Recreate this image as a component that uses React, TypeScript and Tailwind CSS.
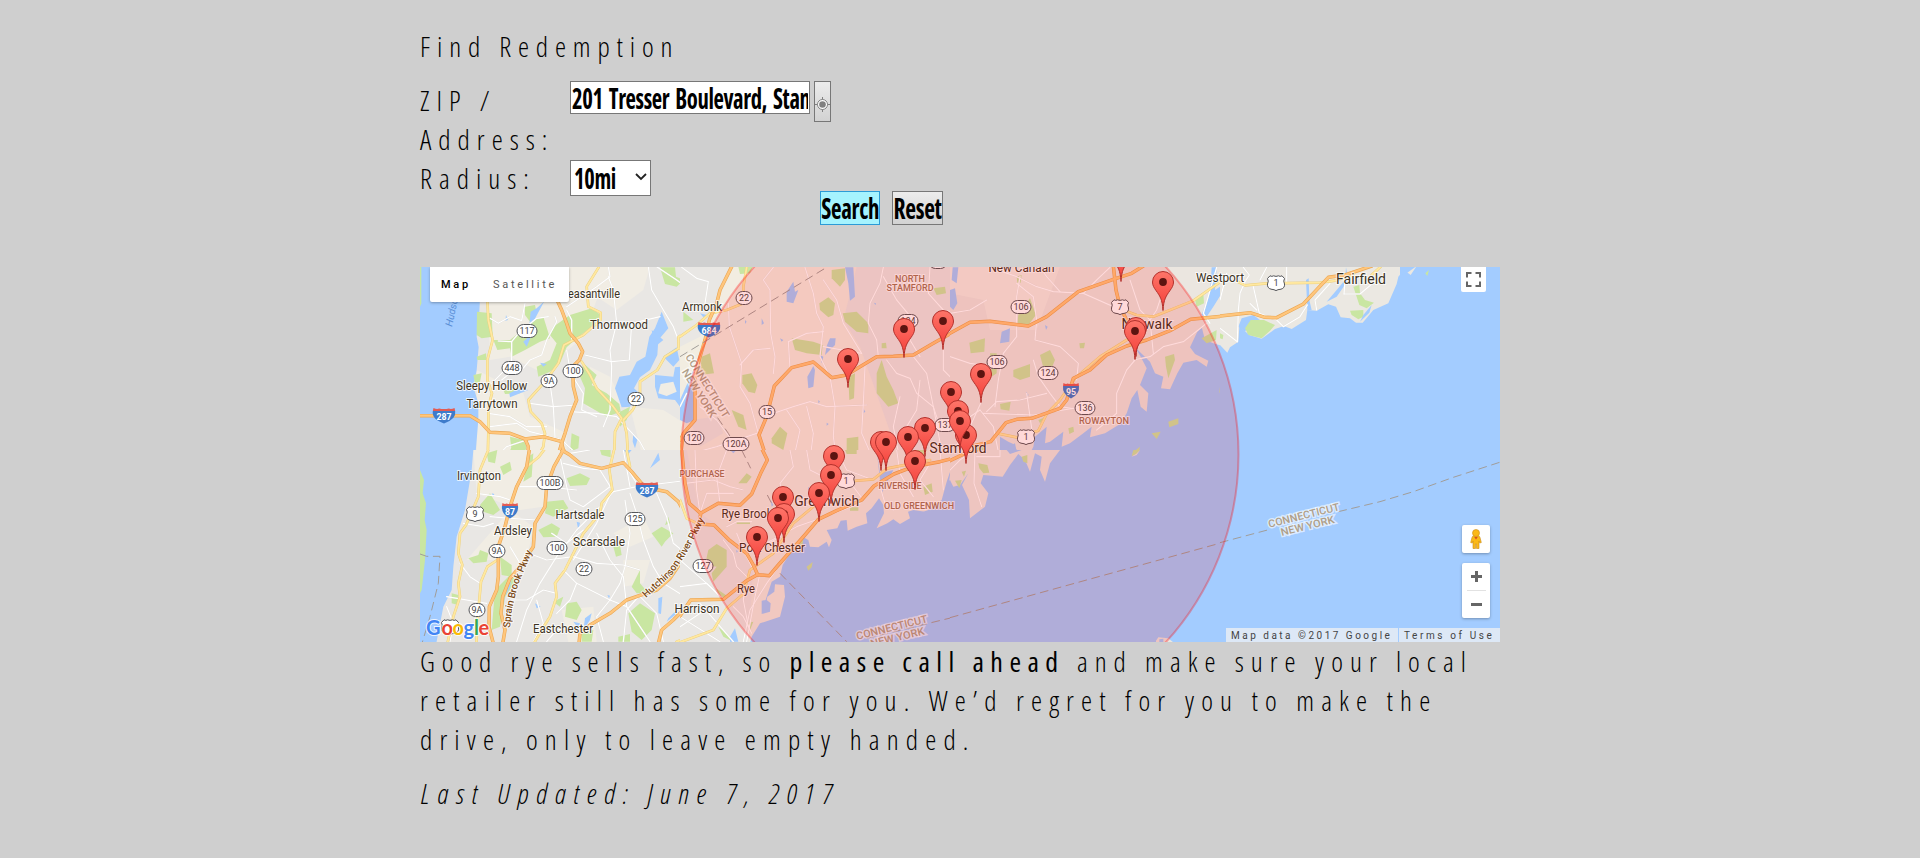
import React from "react";

type RoadKind = "hwy" | "art" | "loc";
type Road = [RoadKind, string];
interface Tile {
  x: number;
  y: number;
  base: string;
  rural?: string[];
  water: string[];
  land?: string[];
  parks: string[];
  lakes: string[];
  roads: Road[];
  dashed?: string[];
}

const LAND = "#e9e7e4";
const RURAL = "#f1ede4";
const WATER = "#a3ccff";
const PARK = "#c9e6a2";

/* Each tile is 280x200 on the map and uses an 840x600 local grid. */
const TILES: Tile[] = [
  {
    x: -10, y: -7, base: LAND,
    rural: [
      "M230 20H600L560 120 520 230 440 300 380 330 300 290 240 300Z",
      "M200 330L340 400 360 470 470 520 470 600 200 600Z",
      "M600 20H720L700 90 620 150 560 110Z", "M660 440L760 450 840 500 840 600 700 600Z",
      "M540 320L600 350 640 430 600 470 530 440Z",
    ],
    water: ["M30 20H215L208 155 200 230 206 262 200 330 190 380 205 430 205 480 195 600H30Z"],
    parks: [
      "M30 20H34V130L30 140Z",
      "M201 155L245 160 248 230 215 235 200 225Z", "M200 290L228 280 230 300 202 300Z",
      "M250 240L300 240 330 215 370 180 400 170 420 235 390 245 345 270 305 290 300 265 262 270Z",
      "M430 200L480 165 545 145 572 165 545 200 500 235 470 262 450 310 420 335 385 350 380 320 420 300 440 250 420 225Z",
      "M345 140L375 135 380 160 360 185 345 165Z",
      "M520 310L560 345 545 375 590 400 628 432 632 455 590 470 520 430 525 385 510 350Z",
      "M750 22H795L798 50 822 60 800 80 765 72Z",
      "M300 530L340 540 350 560 340 590 305 575Z M485 520L508 530 505 565 480 575Z M310 548L340 550 336 580 300 572Z",
      "M630 455L660 440 650 480 630 500Z M810 160L840 150 840 190 820 180Z",
      "M280 390L330 385 330 400 285 402Z M575 570L625 572 625 600 570 600Z M190 345L215 340 210 365 195 370Z",
    ],
    lakes: [
      "M755 155L775 205 745 240 742 285 720 330 690 352 672 385 690 402 660 440 635 442 615 385 628 350 660 345 680 305 706 290 718 230 735 205Z",
      "M735 345L790 350 795 322 812 320 815 395 835 425 830 455 810 440 795 420 745 415 735 380Z",
      "M760 290L800 262 808 300 790 320Z", "M362 155L380 145 402 125 370 185 358 195Z",
      "M340 245L362 225 380 190 350 260Z", "M298 400L330 385 355 390 300 412Z",
      "M670 520L682 540 675 565 668 545Z M700 570L720 590 705 595Z M725 210L760 240 735 260Z M288 165L294 180 286 182Z M390 308L410 312 400 320Z",
    ],
    land: ["M752 372L790 365 800 395 770 408 745 400Z"],
    roads: [
      ["loc", "M240 175L265 190 300 170 335 182 345 130"],
      ["loc", "M265 243L305 245 330 215 380 175 415 170"],
      ["loc", "M305 245V300 L300 340 275 360"],
      ["loc", "M435 170L440 185 410 240 395 285 360 300 335 330"],
      ["loc", "M470 140L560 80 600 50 595 20"],
      ["loc", "M595 50L610 90 620 190 600 270 605 320 600 450 580 500"],
      ["loc", "M525 285L605 305 658 300 665 190 750 170"],
      ["loc", "M715 20L725 90 760 150 790 200 805 240"],
      ["loc", "M470 270L480 330 495 360 520 400 515 450 560 470"],
      ["loc", "M360 430L430 440 500 435"], ["loc", "M420 370L430 440 435 530"],
      ["loc", "M235 460L300 470 350 500 410 500"], ["loc", "M240 500L320 490 360 515 460 540"],
      ["loc", "M480 455L560 460 620 470 690 545 720 600"], ["loc", "M460 545L520 600"],
      ["loc", "M250 600L290 560 350 540"], ["loc", "M740 20L800 60 840 90"],
      ["loc", "M485 240V180L470 150"], ["loc", "M280 335L245 370"],
      ["art", "M232 120L235 180 248 240 232 300 232 360 246 400 235 440 235 520 233 600"],
      ["art", "M566 22L530 80 535 140 572 158 572 180 520 225 462 255 445 310 405 365 355 420 362 455 395 490 405 520 400 560 378 600"],
      ["art", "M515 305L540 345 560 385 610 440 635 475 615 515 612 600"],
      ["art", "M806 265L765 290 742 330 690 365 690 405 668 450 640 480 650 520 655 600"],
      ["art", "M840 205L805 232 806 265"],
      ["hwy", "M430 95L455 150 470 190 480 220 505 250 518 275 508 300 488 320 490 380 500 420 480 470 465 520 455 550 460 570 500 602"],
      ["hwy", "M455 550L440 600"],
      ["hwy", "M30 467H180L210 485 240 517 300 520 345 537 400 530 455 545"],
      ["hwy", "M345 537L355 560 352 600"],
    ],
  },
  {
    x: -10, y: 183, base: LAND,
    rural: [
      "M190 0H460L420 80 400 170 330 180 200 130Z", "M300 180L370 230 350 330 290 380 250 330 170 330Z",
      "M455 480L550 470 560 575 480 600Z", "M610 250L700 200 730 260 660 290Z", "M640 330L720 330 700 400 640 410Z",
    ],
    water: ["M30 0H190L185 60 165 180 140 260 130 350 125 420 100 470 75 600H30Z"],
    parks: [
      "M30 60L42 90 38 130 48 160 44 210 50 240 45 330 35 420 30 430Z",
      "M230 10L262 0 255 40 235 35Z M270 50L300 35 305 60 280 75Z M210 165L240 130 270 180 250 195 220 185Z",
      "M410 155L460 150 475 175 430 200 405 190Z M385 240L425 220 450 235 440 260 400 262Z",
      "M470 85L510 70 540 85 530 105 480 108Z M175 325L205 315 210 300 235 310 230 335 190 340Z",
      "M270 320L305 345 305 380 275 375Z M255 420L300 375 320 390 285 440 270 530 245 540 250 480Z",
      "M655 490L690 460 735 490 725 540 695 570 665 545Z M470 460L500 455 515 480 500 510 465 500Z",
      "M725 250L755 230 790 250 765 275 755 290Z M610 290L630 285 635 315 618 320Z",
      "M665 410L690 360 690 400 715 430 680 430Z M625 560L660 552 660 575 625 575Z",
      "M125 430L145 435 143 465 125 460Z M355 20L370 10 365 80 340 95Z M515 550L550 540 545 575 515 575Z M430 455L460 440 450 470Z",
      "M765 225L775 200 780 220Z M570 0H602V22L575 15Z",
    ],
    lakes: [
      "M745 8L750 30 720 55Z M375 460L392 470 380 475Z M745 445L757 440 753 492 745 490Z M775 505L800 480 795 495 770 515Z",
      "M295 395L305 385 300 410 285 440 280 470Z M500 215L510 218 505 240Z M525 505L545 490 540 510 520 540Z M245 130L253 132 250 140Z M640 0H665L655 12Z M592 435L600 437 597 445Z M490 515L510 520 505 535Z",
    ],
    roads: [
      ["loc", "M450 20L470 110 480 150 520 170 600 110"], ["loc", "M460 40L520 55 570 60 610 125"],
      ["loc", "M655 60L680 100 740 130 770 200 790 280 840 320"],
      ["loc", "M610 125L570 170 500 240 440 320 390 400 350 480 320 575"],
      ["loc", "M600 135L560 220 490 330"], ["loc", "M660 130L680 190 700 270 730 350 760 400 840 450"],
      ["loc", "M610 125L680 110 840 90"], ["loc", "M645 150L660 250 645 350 630 400 600 450"],
      ["loc", "M240 200L300 205 380 210"], ["loc", "M330 110L400 110 500 120"],
      ["loc", "M160 220L220 230 250 220"], ["loc", "M150 340L180 380 210 400"],
      ["loc", "M370 315L410 330 490 320 560 340 640 345 690 360"],
      ["loc", "M460 360L500 400 560 430 600 450 650 470 690 530 720 575"],
      ["loc", "M440 430L400 420 350 450 300 450"], ["loc", "M500 400L480 450 440 490"],
      ["loc", "M560 250L600 330 640 380 650 470"], ["loc", "M690 440L740 490 760 575"],
      ["loc", "M600 450L560 500 580 575"], ["loc", "M300 290L330 340 320 380"],
      ["loc", "M200 130L270 140 300 150"], ["loc", "M640 0L660 110"], ["loc", "M480 10L540 0"],
      ["loc", "M110 470L130 520 120 575"], ["loc", "M410 575L440 540 520 530"], ["loc", "M690 435L650 480 640 575"],
      ["loc", "M110 440L230 460"], ["loc", "M425 250L470 280 520 240"], ["loc", "M380 450L400 520 370 575"],
      ["art", "M235 0L210 60 205 140 168 225 150 250 145 310 157 345 145 400 150 440 130 500 108 600"],
      ["art", "M262 330L232 350 213 395 205 480 198 600"],
      ["art", "M402 0L385 22 350 50 320 110"],
      ["art", "M612 0L598 60 607 120 575 160 570 190 520 250 490 310 465 360 435 400 440 440 420 500 395 540 360 600"],
      ["art", "M650 0L660 50"], ["art", "M840 560L800 575 790 600"],
      ["hwy", "M460 0L432 50 410 110 405 170 375 220 370 290 330 350 300 385 278 440 273 490 285 540 275 600"],
      ["hwy", "M455 0L480 15 510 40 575 55 640 38 665 65 705 112 770 125 805 155 845 225"],
      ["hwy", "M358 0L350 50 320 110 300 170 285 230 265 290 265 380 260 420 238 470 237 530 255 600"],
      ["hwy", "M845 290L780 385 740 420 690 436 650 450 600 490 540 525 510 550 505 600"],
      ["hwy", "M845 455L790 510 755 540 740 600"],
    ],
    dashed: ["M30 312L50 319H90L85 400 60 500 30 600"],
  },
  {
    x: 260, y: -7, base: "#f2ede1",
    water: ["M0 420L40 330 45 480 20 490 0 480Z"],
    parks: [
      "M455 30L495 25 495 60 480 80 455 55Z", "M418 130L445 112 465 130 460 165 445 172 420 150Z",
      "M488 160L530 155 565 190 565 220 530 215 495 185Z", "M335 235L400 245 428 255 425 285 380 280 345 270Z",
      "M187 345L215 340 232 375 225 400 205 395 187 370Z", "M155 450L190 465 200 510 175 500Z",
      "M275 535L300 500 322 520 310 570 275 550Z", "M605 300L620 350 640 390 655 430 625 440 590 400 590 340Z",
      "M505 350L525 340 522 415 508 420Z M500 535L535 530 535 575 520 595 500 580Z",
      "M760 85L795 80 798 100 770 105Z M175 20H218L210 40 180 42Z M10 155L40 180 10 185Z",
      "M65 290L90 280 102 340 60 345Z M605 250L618 248 620 265 605 265Z",
    ],
    lakes: [
      "M495 22H520L525 110 510 122 505 70Z", "M320 95L340 65 345 95 355 90 340 130 320 125Z",
      "M450 235L467 235 465 255 435 285 440 258Z", "M400 318L405 330 400 380 385 385 382 350Z",
      "M810 95L835 85 840 135 820 120Z M420 285L430 290 425 310Z M245 175L252 190 245 195Z M300 235L310 240 305 245Z M195 180L200 185 195 192Z M550 445L556 455 550 460Z M415 420L420 425 415 430Z M440 488L446 492 440 497Z M60 160L80 165 70 172Z M582 128L588 130 586 136Z",
    ],
    roads: [
      ["loc", "M5 22L50 55 85 65 75 130"], ["loc", "M280 22L250 60 270 90 272 220 285 290 280 340"],
      ["loc", "M145 130L148 200 185 310 180 380 210 430 235 520"], ["loc", "M375 22L400 100 410 160 430 200 420 290 450 350"],
      ["loc", "M430 60L470 120 490 190 545 280"], ["loc", "M610 22L600 70 570 130 565 190 590 240 595 290"],
      ["loc", "M610 50L650 120 700 180 690 240 720 290"], ["loc", "M750 22L745 100 790 150 840 160"],
      ["loc", "M180 315L220 270 270 265"], ["loc", "M325 245L380 220 430 215"], ["loc", "M330 325L325 245"],
      ["loc", "M450 350L465 440 460 530 470 600"], ["loc", "M555 320L550 430 545 520 580 600"],
      ["loc", "M280 460L340 440 390 425 440 440 560 435"], ["loc", "M380 440L400 520 390 600"],
      ["loc", "M620 300L650 340 690 355 710 400 760 440 780 500"], ["loc", "M700 290L740 340 760 440 790 600"],
      ["loc", "M790 260V330L830 370"], ["loc", "M720 360L710 450 680 500"], ["loc", "M320 450L360 510 340 600"],
      ["loc", "M60 440L110 480 170 560 220 600"], ["loc", "M0 590L110 560 230 520"], ["loc", "M660 410L640 500 660 600"],
      ["loc", "M430 260L545 280"], ["loc", "M0 440L20 400"],
      ["art", "M0 230L50 195 90 160 140 150 190 130 190 80 200 22"],
      ["hwy", "M155 20L120 90 110 130 88 180 75 240 60 290 45 350 45 480 10 520 0 600"],
      ["hwy", "M840 205L760 250 700 285 640 289 590 290 540 320 500 345 455 353 400 306 335 323 283 378 260 470 237 525 262 602"],
      ["hwy", "M12 520L0 540"],
    ],
    dashed: ["M0 290L440 22", "M90 440L145 520 190 600"],
  },
  {
    x: 260, y: 183, base: "#efebe2",
    water: [
      "M205 600L215 560 240 520 300 500 315 440 312 405 285 403 283 425 262 440 255 480 250 470 275 395 300 380 308 345 330 310 345 300 370 262 385 270 390 290 415 292 440 275 447 292 455 270 440 240 472 235 482 212 500 210 503 242 530 230 562 220 558 190 575 175 597 145 610 165 612 190 590 235 622 220 640 208 660 222 690 205 684 185 700 180 735 185 715 225 692 255 690 292 640 296 630 272 655 275 665 245 690 232 702 195 745 180 785 150 800 95 812 60 808 90 830 120 845 110 845 600Z",
      "M590 0L600 90 612 95 605 130 640 60 600 70Z",
    ],
    parks: [
      "M175 100L200 70 215 80 200 100Z M85 300L110 282 140 300 140 350 100 395 95 370 110 350 75 345Z",
      "M170 215H210V222H170Z M730 110L755 100 758 125 735 135Z M510 172H535V182H510Z M345 280L370 262 368 285 350 300Z",
      "M108 415L145 440 120 445Z M115 530L150 560 160 575 130 560Z M200 520L220 515 210 540Z M380 350L398 336 395 352 385 362Z M700 0H740L730 20 705 18Z M495 0H530V12H500Z",
    ],
    lakes: ["M245 452L260 450 272 460 270 485 245 492Z M150 0H170L160 10Z M150 560L165 535 175 575H150Z M385 110L390 116 385 120Z M272 150L280 165 275 170Z M168 300L174 304 170 308Z"],
    roads: [
      ["loc", "M15 100L100 90 150 110 190 120"], ["loc", "M45 0L50 120 60 190"], ["loc", "M120 160L110 80 140 0"],
      ["loc", "M60 190L80 130 160 130"], ["loc", "M330 0L340 50 300 100 310 140 400 170"],
      ["loc", "M380 0L390 60 450 90"], ["loc", "M470 0L500 60 580 90"], ["loc", "M420 60L520 110 550 150"],
      ["loc", "M0 410L80 400 130 448"], ["loc", "M130 270L160 310 170 350 200 380 190 450 205 530"],
      ["loc", "M190 575L210 480 260 400 310 330"], ["loc", "M160 470L190 500 215 550"], ["loc", "M60 460L160 575"],
      ["loc", "M0 530L90 470"], ["loc", "M0 330L80 400 130 448"], ["loc", "M650 0L660 70 700 140"],
      ["loc", "M750 40L720 90 760 140"], ["loc", "M180 300L250 290 300 260"], ["loc", "M170 250L190 300 215 350"],
      ["loc", "M240 370L225 440 200 575"], ["loc", "M600 110L615 160 640 180"], ["loc", "M780 0L790 120"],
      ["loc", "M140 230L170 215 215 215"], ["loc", "M0 500L120 575"], ["loc", "M220 300L350 230 450 195 540 160"],
      ["art", "M0 577L100 540 140 475 190 432 210 360 280 310 340 220 400 170 430 110 530 92 580 88 622 55 750 30"],
      ["art", "M0 150L20 205 62 225"],
      ["hwy", "M5 0L15 100 28 160 62 190 115 160 180 166 215 132 242 70 262 30 245 -5"],
      ["hwy", "M62 190L58 222 102 225 150 272 200 310 220 345 232 372"],
      ["hwy", "M0 498L32 450 130 448 200 392 232 374 268 377 295 345 372 258 415 208 470 182 545 150 582 108 642 72 700 50 780 35 845 18"],
    ],
    dashed: ["M300 370L500 575", "M560 565L840 497", "M185 0L212 55", "M262 135L280 170"],
  },
  {
    x: 530, y: -7, base: "#ebe6e0",
    rural: ["M0 20H330L260 210 120 210 100 120 0 100Z"],
    water: [
      "M150 530L175 545 190 552 200 570 215 600H230L250 560 255 530 290 500 285 550 300 545 340 515 335 560 360 550 400 520 425 500 420 532 465 520 510 492 530 460 545 415 562 390 572 440 590 455 595 400 570 375 590 325 572 290 555 262 600 305 615 340 640 350 633 385 660 388 682 340 700 308 740 300 770 320 775 302 735 282 720 262 742 215 755 200 765 240 790 250 840 265 840 600H150Z",
      "M755 165L780 95 785 22H800L795 90 840 60 790 140 770 170Z",
    ],
    parks: [
      "M205 165L240 115 258 165 235 195 202 190Z", "M58 248L105 235 103 275 62 280Z", "M190 330L240 312 240 350 210 360 190 350Z",
      "M270 285L300 270 315 300 300 335 278 315Z", "M150 432L182 425 178 452 152 448Z M355 505L370 500 372 515 358 522Z",
      "M645 290L672 282 675 300 655 355 648 320Z", "M735 120L760 100 762 130 740 140Z M755 235L800 210 798 240 770 250Z",
      "M655 485L685 475 685 492 658 502Z M605 520L632 515 620 537Z M545 580L570 560 565 582 548 592Z M810 380L822 372 820 390 808 398Z",
      "M388 250L405 248 402 265 390 265Z M265 480L285 472 270 490Z M120 280H140V340L125 350Z M200 50L215 45 212 68 202 68Z M80 560H105V600H85Z",
    ],
    lakes: [
      "M0 90L15 85 22 130 10 150 0 140Z M155 215L180 205 178 245 150 250Z M285 195L293 200 288 210Z M228 395L236 405 230 412Z M8 22H25L20 70 5 60Z M175 560L190 600H205L195 550Z",
    ],
    roads: [
      ["loc", "M120 22L200 50 260 80 310 95 400 100 490 140"], ["loc", "M210 50L200 110 200 230 160 280 145 360 135 440"],
      ["loc", "M200 70L250 110 260 180 255 240 330 260 385 310 380 360"], ["loc", "M330 95L290 50 270 22"],
      ["loc", "M250 300L265 350 300 400 330 440 400 450"], ["loc", "M0 290L60 310 130 320"],
      ["loc", "M92 430L60 500 30 560"], ["loc", "M90 450L130 500 150 600"], ["loc", "M110 455L140 425 210 420 290 400"],
      ["loc", "M0 160L60 150 110 120"], ["loc", "M540 60L570 150 600 180"], ["loc", "M555 300L530 330 500 400 500 460 440 510"],
      ["loc", "M550 300L600 290 640 260 700 245 770 190"], ["loc", "M640 90L620 150 600 180 610 280"],
      ["loc", "M780 190L760 160 800 22"], ["loc", "M0 600L60 470 90 450"], ["loc", "M400 100L440 60 480 22"],
      ["loc", "M230 400L240 470 250 540"], ["loc", "M20 570L80 580 150 590"], ["loc", "M100 460L250 465 400 440"],
      ["art", "M142 520L200 532 265 512 290 462 330 420 375 355 450 290 530 240"],
      ["art", "M520 150L560 165 610 170 730 122 840 45"],
      ["hwy", "M0 220L60 187 120 184 235 198 290 170 385 95 490 58 545 40 580 18"],
      ["hwy", "M490 18L498 90 510 140 540 200 560 250"],
      ["hwy", "M0 600L60 560 122 545 168 488 200 478 245 475 330 445 350 420 370 355 420 330 470 285 530 258 590 240 660 212 722 178 845 166"],
    ],
  },
  {
    x: 530, y: 183, base: WATER,
    land: [
      "M0 0H330L300 40 285 95 270 60 275 20 255 10 240 65 225 30 205 12 180 45 158 80 100 75 92 100 115 130 105 170 60 205 57 150 36 105 55 70 30 105 10 110 0 90Z",
      "M618 572L625 562 655 565 670 577H618Z M545 20L570 0 560 15Z",
    ],
    water: ["M170 0L180 12 200 5 215 0Z"],
    parks: ["M85 40L112 45 118 68 100 70 88 55Z M215 20L232 15 232 40 220 35Z M15 92L35 90 28 115Z M545 18L550 0H570L558 12Z M35 65L48 62 42 80Z"],
    lakes: ["M628 568L640 566 640 577H628Z"],
    roads: [["loc", "M75 0L72 100 95 170"], ["loc", "M80 20H150V0"], ["loc", "M0 60L30 30 60 10"], ["hwy", "M0 32L50 8 80 0"]],
    dashed: ["M0 503L845 270"],
  },
  {
    x: 800, y: -7, base: WATER,
    land: [
      "M0 18H590L572 45 552 30 535 50 530 72 505 130 460 150 428 188 408 188 390 175 362 172 348 140 325 133 290 152 262 150 258 180 215 207 192 198 165 207 125 236 90 226 70 210 58 200 55 245 30 262 22 278 0 255Z",
    ],
    water: ["M540 18H590L560 40 540 45Z", "M55 200L65 175 100 165 120 180 90 190 75 215Z", "M258 60L266 55 268 120 275 150 262 150Z"],
    parks: ["M75 205L92 180 132 180 165 195 150 212 125 235 85 225Z", "M400 80L418 75 420 100 435 120 462 128 440 145 418 135Z", "M390 152L430 150 430 170 415 178 395 165Z", "M616 40L627 30 622 48Z M0 220L10 225 8 238 0 235Z"],
    lakes: ["M350 90L375 60 378 22 385 60 350 110 320 125Z", "M430 165L455 135 448 158 420 185Z"],
    roads: [
      ["loc", "M70 22L88 45 75 65 60 100 55 150 52 245"], ["loc", "M20 40L0 120"], ["loc", "M100 80L118 160 170 180 190 200 240 170 262 135"],
      ["loc", "M120 60L140 22"], ["loc", "M200 22L200 70"], ["loc", "M290 150L285 120 330 70"], ["loc", "M372 102L375 60"],
      ["loc", "M372 102H420L470 60"], ["loc", "M90 130L110 150"], ["loc", "M0 205L52 245"],
      ["art", "M55 66L75 76 140 70 300 68 345 62 400 45"], ["art", "M455 45L482 20"],
      ["hwy", "M0 168L90 158 135 172 170 173 250 132 325 52 375 45 455 18"],
    ],
  },
  {
    x: 800, y: 183, base: WATER, water: [], parks: [], lakes: [], roads: [],
    dashed: ["M0 278L150 238", "M355 185L480 155 580 125 700 82 845 35"],
  },
];

/* Built-up areas that sit below the parks. */
const URBAN: Record<string, string[]> = {
  "260,-7": ["M0 20H160L60 230 0 260Z", "M530 20H840V600H660L540 260 490 180Z", "M30 480L110 470 130 520 60 560Z"],
  "260,183": ["M20 0L60 190 110 225 220 350 205 600 0 600 0 0Z"],
};

const CASING: Record<RoadKind, string> = { hwy: "#e9a653", art: "#eccf7c", loc: "#dedbd6" };
const FILL: Record<RoadKind, string> = { hwy: "#ffc67c", art: "#ffe8a0", loc: "#ffffff" };
const OUTER: Record<RoadKind, number> = { hwy: 10.5, art: 8, loc: 4 };
const INNER: Record<RoadKind, number> = { hwy: 7, art: 5.5, loc: 3.6 };

function TileView({ t }: { t: Tile }) {
  const kinds: RoadKind[] = ["loc", "art", "hwy"];
  const fillAll = (list: string[] | undefined, c: string) =>
    (list ?? []).map((d, i) => <path key={c + i} d={d} fill={c} />);
  return (
    <svg x={t.x} y={t.y} width={280} height={200} viewBox="0 0 840 600" overflow="hidden">
      <rect width={840} height={600} fill={t.base} />
      {fillAll(t.rural, RURAL)}
      {t.base === WATER ? fillAll(t.land, "#ebe8e2") : null}
      {fillAll(URBAN[t.x + "," + t.y], LAND)}
      {fillAll(t.water, WATER)}
      {fillAll(t.parks, PARK)}
      {fillAll(t.lakes, WATER)}
      {t.base !== WATER ? fillAll(t.land, RURAL) : null}
      {kinds.map((k) => (
        <g key={k} fill="none" strokeLinejoin="round" strokeLinecap="round">
          {t.roads.filter((r) => r[0] === k).map((r, i) => (
            <path key={"c" + i} d={r[1]} stroke={CASING[k]} strokeWidth={OUTER[k]} />
          ))}
          {t.roads.filter((r) => r[0] === k).map((r, i) => (
            <path key={"f" + i} d={r[1]} stroke={FILL[k]} strokeWidth={INNER[k]} />
          ))}
        </g>
      ))}
      {(t.dashed ?? []).map((d, i) => (
        <path key={i} d={d} fill="none" stroke="#a19d99" strokeWidth={3} strokeDasharray="26 14" />
      ))}
    </svg>
  );
}

/* text, centre x, baseline, width, size */
type Label = [string, number, number, number, number];
const TOWNS: Label[] = [
  ["easantville", 174, 31, 52, 12], ["Thornwood", 199, 62, 58, 12],
  ["Sleepy Hollow", 71.7, 123, 71, 12], ["Tarrytown", 72, 141, 51, 12],
  ["Irvington", 59, 213, 44, 12], ["Hartsdale", 160, 252, 49, 12],
  ["Ardsley", 93, 268, 38, 12], ["Scarsdale", 179, 279, 52, 12],
  ["Eastchester", 143, 366, 60, 12], ["Harrison", 277, 346, 45, 12],
  ["Rye", 326, 326, 18, 12], ["Rye Brook", 327, 251, 51, 12],
  ["Port Chester", 352, 285, 66, 12], ["Greenwich", 406.7, 239, 65, 14.5],
  ["Armonk", 282, 44, 40, 12], ["New Canaan", 601.5, 5, 66, 12],
  ["Norwalk", 727, 62, 51, 14.5], ["Stamford", 538, 186, 57, 14.5],
  ["Westport", 800, 15, 48, 12], ["Fairfield", 941, 17, 50, 14],
];
const AREAS: Label[] = [
  ["NORTH", 490, 15, 30, 9.5], ["STAMFORD", 490, 24, 47, 9.5], ["PURCHASE", 282, 210, 45, 9.5],
  ["RIVERSIDE", 480, 222, 43, 9.5], ["OLD GREENWICH", 499, 242, 70, 9.5], ["ROWAYTON", 684, 157, 50, 9.5],
];
const BORDERS: { x: number; y: number; a: number; dx: number }[] = [
  { x: 472, y: 361, a: -14, dx: 3 }, { x: 884, y: 249, a: -14, dx: 1 }, { x: 287, y: 119, a: 58, dx: 2 },
];
/* number, x, y, width */
const OVALS: [string, number, number, number][] = [
  ["117", 107, 64, 20], ["448", 92, 101, 20], ["9A", 129, 114, 16], ["100", 153, 104, 20], ["22", 216, 132, 16],
  ["100B", 130, 216, 26], ["125", 215, 252, 20], ["100", 137, 281, 20], ["9A", 77, 284, 16], ["22", 164, 302, 16],
  ["9A", 57, 343, 16], ["22", 324, 31, 16], ["104", 488, 54, 20], ["15", 347, 145, 16], ["120", 274, 171, 20],
  ["120A", 316, 177, 26], ["137", 525, 158, 20], ["106", 601, 40, 20], ["106", 577, 95, 20], ["124", 628, 106, 20],
  ["136", 665, 141, 20], ["127", 283, 299, 20], ["", 518, -5, 18],
];
const US: [string, number, number][] = [
  ["9", 55, 247], ["", 30, 360], ["7", 700, 40], ["1", 606, 170], ["1", 426, 214], ["1", 856, 16],
];
const INTERSTATES: [string, number, number][] = [
  ["287", 24, 149], ["87", 90, 244], ["287", 227, 223], ["684", 289, 63], ["95", 651, 124],
];
const PINS: [number, number][] = [
  [701, -14], [743, 15], [523, 54], [484, 62], [716, 61], [715, 64], [428, 92], [561, 107], [531, 125],
  [538, 144], [546, 168], [540, 154], [505, 161], [488, 170], [461, 175], [466, 175], [414, 189], [495, 194],
  [411, 208], [399, 226], [363, 230], [364, 247], [358, 251], [337, 270],
];

const FONT = "Roboto, sans-serif";

function TownLabel({ l, fill, weight }: { l: Label; fill: string; weight: number }) {
  return (
    <text x={l[1]} y={l[2]} fontSize={l[4]} textAnchor="middle" textLength={l[3]} lengthAdjust="spacingAndGlyphs"
      fill={fill} stroke="#fff" strokeOpacity={0.75} strokeWidth={2} paintOrder="stroke" fontWeight={weight} fontFamily={FONT}>
      {l[0]}
    </text>
  );
}

function MapDrawing() {
  return (
    <svg className="block h-[375px] w-[1080px]" viewBox="0 0 1080 375">
      {TILES.map((t) => <TileView key={t.x + "," + t.y} t={t} />)}

      {BORDERS.map((b, i) => (
        <g key={i} transform={`translate(${b.x} ${b.y}) rotate(${b.a})`} fontFamily={FONT} fontSize={10.5} fontWeight={500}
          textAnchor="middle" fill="#b09f88" stroke="#fff" strokeOpacity={0.6} strokeWidth={2.8} paintOrder="stroke">
          <text y={3} textLength={73} lengthAdjust="spacingAndGlyphs">CONNECTICUT</text>
          <text x={b.dx} y={14} textLength={55} lengthAdjust="spacingAndGlyphs">NEW YORK</text>
        </g>
      ))}
      <path id="sprain" d="M90 361L92 342 98 318 116 276" fill="none" />
      <path id="hutch" d="M226 331L252 308 268 284 287 248" fill="none" />
      <g fontFamily={FONT} fontSize={10} fontWeight={500} fill="#7b4b17" stroke="#fff" strokeOpacity={0.8} strokeWidth={1.8} paintOrder="stroke">
        <text><textPath href="#sprain" textLength={80}>Sprain Brook Pkwy</textPath></text>
        <text><textPath href="#hutch" textLength={99}>Hutchinson River Pkwy</textPath></text>
      </g>
      <text transform="translate(32 60) rotate(-78)" fontFamily={FONT} fontSize={10} fontStyle="italic" fill="#5b8fd6">Hudson</text>

      {OVALS.map(([n, x, y, w], i) => (
        <g key={i}>
          <rect x={x - w / 2} y={y - 6.5} width={w} height={13} rx={6.5} fill="#fff" stroke="#55565a" strokeWidth={1} />
          <text x={x} y={y + 3.2} fontSize={9} textAnchor="middle" fill="#444" fontFamily={FONT}>{n}</text>
        </g>
      ))}
      {US.map(([n, x, y], i) => (
        <g key={i}>
          <path transform={`translate(${x - 9} ${y - 8})`} fill="#fff" stroke="#55565a" strokeWidth={1}
            d="M3 .8Q5 2 6.500.8Q9 2 11.500.8Q13 2 15 .8L17.500 3.500Q16 6 17.500 9Q18 13 14 14.200Q10.500 14.500 9 15.600Q7.500 14.500 4 14.200Q0 13 .5 9Q2 6 .5 3.500Z" />
          <text x={x} y={y + 3.2} fontSize={9} textAnchor="middle" fill="#444" fontFamily={FONT}>{n}</text>
        </g>
      ))}
      {INTERSTATES.map(([n, x, y], i) => {
        const k = n.length === 3 ? 1.4 : 1;
        return (
          <g key={i}>
            <g transform={`translate(${x} ${y - 1}) scale(${k} 1)`}>
              <path d="M-8-4Q-9 4 0 8.500Q9 4 8-4Z" fill="#3d7bcb" />
              <path d="M-7.500-7Q-5-5.500-3.500-6.500Q0-5.500 3.500-6.500Q5-5.500 7.500-7L8-4H-8Z" fill="#e25b54" />
            </g>
            <text x={x} y={y + 4} fontSize={8.8} fontWeight={700} textAnchor="middle" fill="#fff" fontFamily={FONT}>{n}</text>
          </g>
        );
      })}
      {AREAS.map((l, i) => <TownLabel key={i} l={l} fill="#a3765a" weight={500} />)}
      {TOWNS.map((l, i) => <TownLabel key={i} l={l} fill="#3b3223" weight={400} />)}

      <circle cx={540} cy={187.5} r={278.5} fill="#ff0000" fillOpacity={0.15} stroke="#ff0000" strokeOpacity={0.3} strokeWidth={2} />

      <defs>
        <linearGradient id="pin" x1="0" y1="0" x2="0" y2="1">
          <stop offset="0" stopColor="#fe7569" />
          <stop offset="1" stopColor="#f33c37" />
        </linearGradient>
      </defs>
      {PINS.map(([x, y], i) => (
        <g key={i} transform={`translate(${x} ${y})`}>
          <path d="M0 28.500C-.6 17-3.500 13.500-6.800 8.800C-9 5.700-10.500 3.500-10.500 0A10.500 10.500 0 0 1 10.500 0C10.500 3.500 9 5.700 6.800 8.800C3.500 13.500 .6 17 0 28.500Z"
            fill="url(#pin)" stroke="#b3302b" strokeWidth={1} />
          <circle r={3.9} fill="#5d1410" />
        </g>
      ))}

      <g fontFamily="Lato, Roboto, sans-serif" fontSize={20} fontWeight={700} stroke="#fff" strokeOpacity={0.8} strokeWidth={2} paintOrder="stroke">
        <text y={367.5}>
          <tspan x={6} fill="#4285f4">G</tspan>
          <tspan x={21.5} fill="#ea4335">o</tspan>
          <tspan x={32.5} fill="#fbbc05">o</tspan>
          <tspan x={43.5} fill="#4285f4">g</tspan>
          <tspan x={54} fill="#34a853">l</tspan>
          <tspan x={58.5} fill="#ea4335">e</tspan>
        </text>
      </g>
    </svg>
  );
}

function MapPanel() {
  return (
    <div className="relative h-[375px] w-[1080px] overflow-hidden bg-[#a3ccff] font-['Roboto',sans-serif] font-normal font-stretch-normal tracking-normal">
      <MapDrawing />
      <div className="absolute left-[10px] top-0 flex h-[35px] w-[139px] items-center rounded-b-[2px] bg-white text-[11px] leading-none shadow-[0_1px_3px_rgba(0,0,0,0.3)]">
        <span className="ml-[11px] w-[52px] font-medium tracking-[2.7px] text-black">Map</span>
        <span className="tracking-[2.75px] text-[#565656]">Satellite</span>
      </div>
      <div className="absolute right-[14px] top-0 flex h-[25px] w-[25px] items-center justify-center rounded-b-[2px] bg-white">
        <svg className="h-[15px] w-[15px]" viewBox="0 0 15 15" fill="none" stroke="#666" strokeWidth={2}>
          <path d="M1 5.500V1H5.500M9.500 1H14V5.500M14 9.500V14H9.500M5.500 14H1V9.500" />
        </svg>
      </div>
      <div className="absolute left-[1042px] top-[258px] flex h-[28px] w-[28px] items-center justify-center rounded-[2px] bg-white shadow-[0_1px_3px_rgba(0,0,0,0.3)]">
        <svg className="h-[20px] w-[12px]" viewBox="0 0 12 20">
          <path d="M2 8.500Q2 7 4 7H8Q10 7 10 8.500L11.300 13.500L9.800 14L9 12V19.500H6.500V15H5.500V19.500H3V12L2.200 14L.7 13.500Z" fill="#fbb917" stroke="#c98a1b" strokeWidth={0.6} />
          <circle cx={6} cy={4} r={3.5} fill="#fbb917" stroke="#c98a1b" strokeWidth={0.6} />
          <path d="M4.200 8H7.800L6 10.500Z" fill="#d9541e" />
        </svg>
      </div>
      <div className="absolute left-[1042px] top-[296px] flex h-[55px] w-[28px] flex-col items-center rounded-[2px] bg-white shadow-[0_1px_3px_rgba(0,0,0,0.3)]">
        <svg className="h-[27px] w-[28px]" viewBox="0 0 28 27" stroke="#666" strokeWidth={3}><path d="M9 13.500H20M14.500 8V19" /></svg>
        <div className="h-px w-[19px] bg-[#e2e2e2]" />
        <svg className="h-[27px] w-[28px]" viewBox="0 0 28 27" stroke="#666" strokeWidth={3}><path d="M9 13.500H20" /></svg>
      </div>
      <div className="absolute bottom-0 right-0 flex h-[14px] w-[274px] gap-px text-[10px] leading-[15px] text-[#444]">
        <div className="w-[172px] whitespace-nowrap bg-[#dde8f6] pl-[5px] tracking-[2.5px]">Map data ©2017 Google</div>
        <div className="w-[101px] whitespace-nowrap bg-[#dde8f6] pl-[5px] tracking-[2.6px]">Terms of Use</div>
      </div>
    </div>
  );
}

export default function App() {
  return (
    <div className="min-h-[858px] bg-[#cfcfcf] text-black">
      <main className="mx-auto w-[1080px] pt-[27px] font-['Open_Sans',sans-serif] text-[28px] leading-[39px] font-light font-stretch-condensed tracking-[7px]">
        <p className="h-[39px] whitespace-nowrap tracking-[6.85px]">Find Redemption</p>
        <div className="mt-[15px] flex h-[78px]">
          <div className="w-[150px]">ZIP /<br />Address:</div>
          <div className="flex h-[41px] items-start">
            <div className="flex h-[33px] w-[240px] items-center overflow-hidden border border-[#777] bg-white px-px">
              <div className="w-full overflow-hidden">
                <div className="w-[280px] origin-left translate-y-px scale-x-[.81] whitespace-nowrap font-bold leading-[33px] tracking-[-0.5px] [word-spacing:3px]">201 Tresser Boulevard, Stamford</div>
              </div>
            </div>
            <button className="ml-[4px] flex h-[41px] w-[17px] items-center justify-center border border-[#777] bg-gradient-to-b from-[#ececec] to-[#d2d2d2] pt-[6px]">
              <svg className="h-[15px] w-[15px] shrink-0" viewBox="0 0 15 15" fill="none" stroke="#808080">
                <circle cx={7.5} cy={7.5} r={5} fill="#fff" />
                <circle cx={7.5} cy={7.5} r={3.3} fill="#808080" stroke="none" />
                <path d="M7.500 0V2.500M7.500 12.500V15M0 7.500H2.500M12.500 7.500H15" />
              </svg>
            </button>
          </div>
        </div>
        <div className="flex h-[32px]">
          <div className="w-[150px] whitespace-nowrap">Radius:</div>
          <div className="mt-px flex h-[36px] w-[81px] shrink-0 items-center justify-between border border-[#777] bg-white pl-[3px] pr-[3px]">
            <span className="w-[48px] origin-left scale-x-[.8] font-bold leading-[34px] tracking-[-0.4px]">10mi</span>
            <svg className="mt-[-2px] h-[8px] w-[12px]" viewBox="0 0 12 8" fill="none" stroke="#222" strokeWidth={1.8}><path d="M1 1L6 6L11 1" /></svg>
          </div>
        </div>
        <div className="flex h-[76px] items-start pl-[400px]">
          <button className="flex h-[34px] w-[60px] items-center justify-center border border-[#2c9bd6] bg-[#a5f3fe] font-bold leading-[32px] tracking-[-0.4px]">
            <span className="scale-x-[.82]">Search</span>
          </button>
          <button className="ml-[12px] flex h-[34px] w-[51px] items-center justify-center border border-[#777] bg-gradient-to-b from-[#ececec] to-[#d2d2d2] font-bold leading-[32px] tracking-[-0.4px]">
            <span className="scale-x-[.84]">Reset</span>
          </button>
        </div>
        <MapPanel />
        <div className="whitespace-nowrap tracking-[7.13px]">
          <p>
            <span className="tracking-[6.93px]">Good rye sells fast, so </span>
            <strong className="font-medium tracking-[6.45px]">please call ahead</strong>
            <span className="tracking-[7px]"> and make sure your local</span>
            <br />retailer still has some for you. We’d regret for you to make the
            <br />drive, only to leave empty handed.
          </p>
          <p className="mt-[15px] pl-px italic tracking-[7.65px]">Last Updated: June 7, 2017</p>
        </div>
      </main>
    </div>
  );
}
